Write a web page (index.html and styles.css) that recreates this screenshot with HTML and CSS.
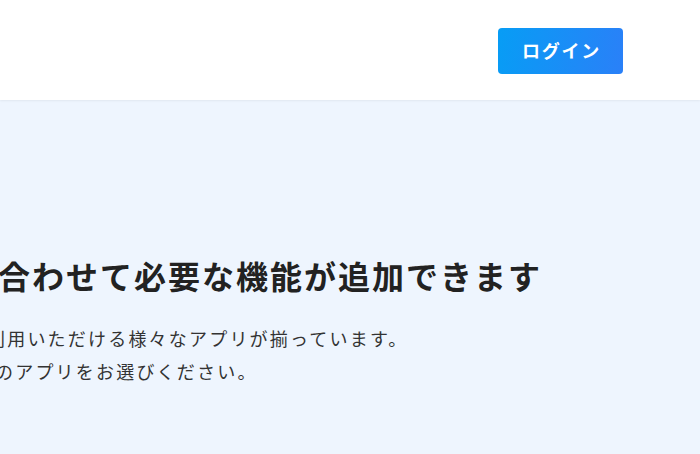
FILE: index.html
```html
<!DOCTYPE html>
<html lang="ja">
<head>
<meta charset="utf-8">
<title>アプリストア</title>
<link rel="stylesheet" href="styles.css">
</head>
<body>
<header class="site-header">
  <a class="login-btn" href="#">ログイン</a>
</header>
<section class="hero">
  <div class="hero-text">
    <h1 class="hero-title">あなたのショップに合わせて必要な機能が追加できます</h1>
    <p class="hero-lead">
      <span class="line">ショップ開設後すぐ1クリックで利用いただける様々なアプリが揃っています。</span>
      <span class="line">あなたのお店の運営にもぴったりのアプリをお選びください。</span>
    </p>
  </div>
</section>
</body>
</html>
```

FILE: styles.css
```css
* { box-sizing: border-box; }
html, body {
  margin: 0;
  padding: 0;
  height: 100%;
  overflow: hidden;
}
body {
  font-family: "Noto Sans CJK JP", "Noto Sans", sans-serif;
  background: #eef5fe;
  color: #333;
}
.site-header {
  height: 100px;
  background: #fff;
  display: flex;
  align-items: center;
  justify-content: flex-end;
  padding: 2px 77px 0 0;
  box-shadow: 0 1px 2px rgba(0, 0, 0, 0.06);
  position: relative;
}
.login-btn {
  width: 125px;
  height: 46px;
  border-radius: 4px;
  background: linear-gradient(100deg, #079df5 0%, #2a80f8 100%);
  color: #fff;
  font-weight: 700;
  font-size: 18px;
  letter-spacing: 0.1em;
  text-decoration: none;
  display: flex;
  align-items: center;
  justify-content: center;
  padding: 0 0 3px 2px;
}
.hero {
  height: 354px;
  overflow: hidden;
  padding-top: 153px;
}
.hero-text {
  margin-left: -308px;
  white-space: nowrap;
}
.hero-title {
  margin: 0;
  font-size: 32px;
  line-height: 44px;
  font-weight: 700;
  letter-spacing: 2px;
  color: #222;
}
.hero-lead {
  margin: 25px 0 0;
  font-size: 18px;
  line-height: 33px;
  letter-spacing: 2.2px;
  color: #333;
}
.line { display: block; }
```
